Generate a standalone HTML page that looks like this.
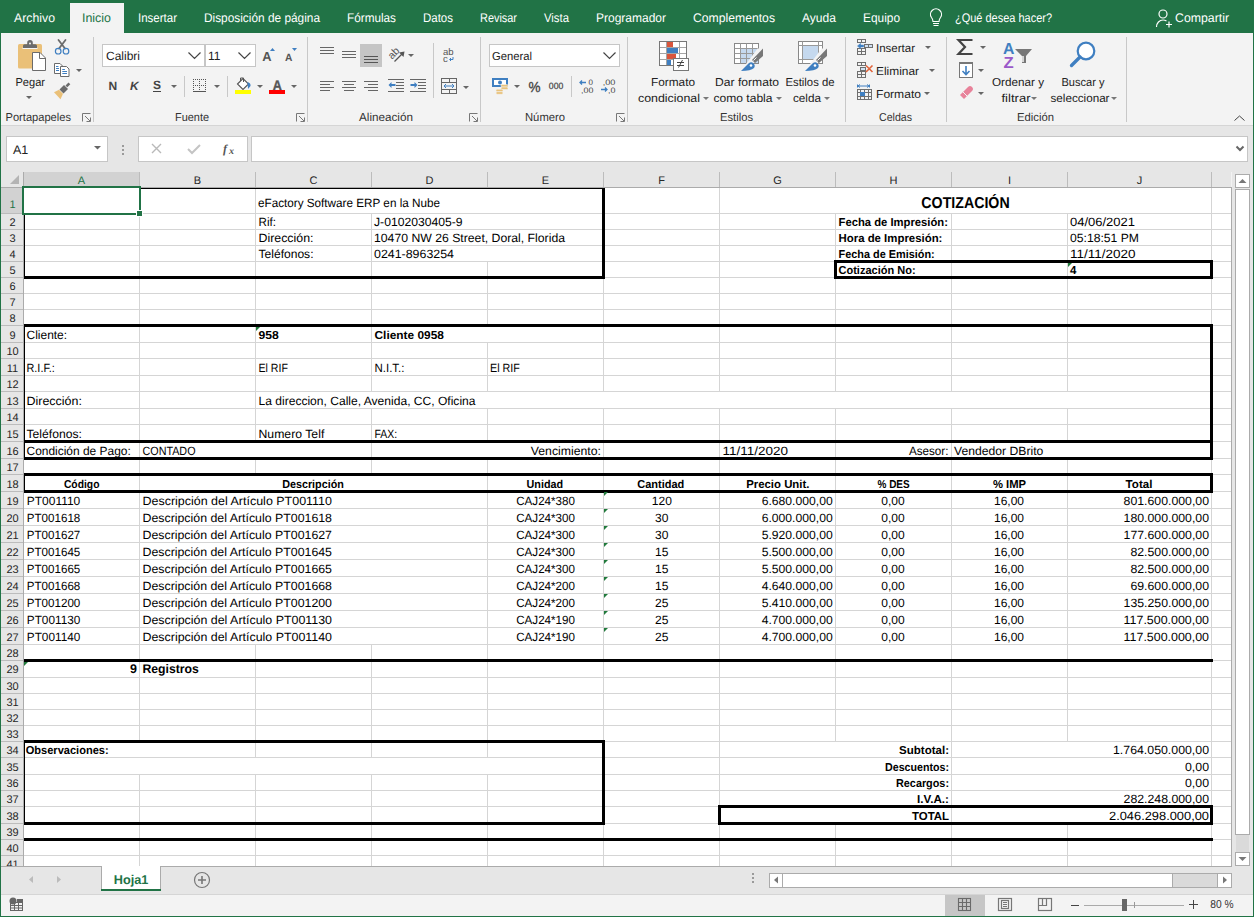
<!DOCTYPE html>
<html><head><meta charset="utf-8"><title>Excel - Cotización</title>
<style>
html,body{margin:0;padding:0;width:1254px;height:917px;overflow:hidden;background:#f3f3f3}
svg{display:block;font-family:"Liberation Sans", sans-serif}
</style></head><body>
<svg width="1254" height="917" viewBox="0 0 1254 917" text-rendering="geometricPrecision">
<rect x="0" y="0" width="1254" height="917" fill="#f3f3f3" />
<rect x="0" y="0" width="1254" height="33" fill="#217346" />
<rect x="70" y="3" width="54" height="30" fill="#f3f3f3" />
<text x="14" y="22" font-size="12.5" fill="#ffffff" text-anchor="start" textLength="41" lengthAdjust="spacingAndGlyphs" >Archivo</text>
<text x="82" y="22" font-size="12.5" fill="#217346" text-anchor="start" textLength="29" lengthAdjust="spacingAndGlyphs" >Inicio</text>
<text x="138" y="22" font-size="12.5" fill="#ffffff" text-anchor="start" textLength="39" lengthAdjust="spacingAndGlyphs" >Insertar</text>
<text x="204" y="22" font-size="12.5" fill="#ffffff" text-anchor="start" textLength="116" lengthAdjust="spacingAndGlyphs" >Disposición de página</text>
<text x="347" y="22" font-size="12.5" fill="#ffffff" text-anchor="start" textLength="49" lengthAdjust="spacingAndGlyphs" >Fórmulas</text>
<text x="423" y="22" font-size="12.5" fill="#ffffff" text-anchor="start" textLength="30" lengthAdjust="spacingAndGlyphs" >Datos</text>
<text x="480" y="22" font-size="12.5" fill="#ffffff" text-anchor="start" textLength="37" lengthAdjust="spacingAndGlyphs" >Revisar</text>
<text x="544" y="22" font-size="12.5" fill="#ffffff" text-anchor="start" textLength="25" lengthAdjust="spacingAndGlyphs" >Vista</text>
<text x="596" y="22" font-size="12.5" fill="#ffffff" text-anchor="start" textLength="70" lengthAdjust="spacingAndGlyphs" >Programador</text>
<text x="693" y="22" font-size="12.5" fill="#ffffff" text-anchor="start" textLength="82" lengthAdjust="spacingAndGlyphs" >Complementos</text>
<text x="802" y="22" font-size="12.5" fill="#ffffff" text-anchor="start" textLength="34" lengthAdjust="spacingAndGlyphs" >Ayuda</text>
<text x="863" y="22" font-size="12.5" fill="#ffffff" text-anchor="start" textLength="37" lengthAdjust="spacingAndGlyphs" >Equipo</text>
<text x="955" y="22" font-size="12.5" fill="#ffffff" text-anchor="start" textLength="97" lengthAdjust="spacingAndGlyphs" >¿Qué desea hacer?</text>
<text x="1175" y="22" font-size="12.5" fill="#ffffff" text-anchor="start" textLength="54" lengthAdjust="spacingAndGlyphs" >Compartir</text>
<g fill="none" stroke="#fff" stroke-width="1.2"><path d="M931.5,17.5 a5.5,5.5 0 1 1 9,0 c-1,1.3 -1.5,2.3 -1.5,4 h-6 c0,-1.7 -0.5,-2.7 -1.5,-4z"/><path d="M933,23.5 h6 M933.5,25.5 h5"/></g>
<g fill="none" stroke="#fff" stroke-width="1.2"><circle cx="1163" cy="14" r="4"/><path d="M1156.5,27 c0,-4 3,-7 6.5,-7 c1.5,0 2.5,0.4 3.5,1"/><path d="M1166,24.5 h6 M1169,21.5 v6"/></g>
<rect x="1" y="33" width="1252" height="92" fill="#f3f3f3" />
<rect x="1" y="125" width="1252" height="1" fill="#d5d5d5" />
<rect x="93" y="37" width="1" height="85" fill="#c8c8c8" />
<rect x="307" y="37" width="1" height="85" fill="#c8c8c8" />
<rect x="480" y="37" width="1" height="85" fill="#c8c8c8" />
<rect x="627" y="37" width="1" height="85" fill="#c8c8c8" />
<rect x="845" y="37" width="1" height="85" fill="#c8c8c8" />
<rect x="946" y="37" width="1" height="85" fill="#c8c8c8" />
<rect x="1126" y="37" width="1" height="85" fill="#c8c8c8" />
<text x="5.5" y="121" font-size="11.5" fill="#333333" text-anchor="start" textLength="65.5" lengthAdjust="spacingAndGlyphs" >Portapapeles</text>
<text x="175" y="121" font-size="11.5" fill="#333333" text-anchor="start" textLength="34" lengthAdjust="spacingAndGlyphs" >Fuente</text>
<text x="359" y="121" font-size="11.5" fill="#333333" text-anchor="start" textLength="54" lengthAdjust="spacingAndGlyphs" >Alineación</text>
<text x="525" y="121" font-size="11.5" fill="#333333" text-anchor="start" textLength="40" lengthAdjust="spacingAndGlyphs" >Número</text>
<text x="720" y="121" font-size="11.5" fill="#333333" text-anchor="start" textLength="33" lengthAdjust="spacingAndGlyphs" >Estilos</text>
<text x="879" y="121" font-size="11.5" fill="#333333" text-anchor="start" textLength="33" lengthAdjust="spacingAndGlyphs" >Celdas</text>
<text x="1017" y="121" font-size="11.5" fill="#333333" text-anchor="start" textLength="37" lengthAdjust="spacingAndGlyphs" >Edición</text>
<g fill="none" stroke="#777" stroke-width="1"><path d="M82.5,121.5 v-8 h8"/><path d="M85,116 l5,5 M90.5,117.5 v4 h-4"/></g>
<g fill="none" stroke="#777" stroke-width="1"><path d="M296.5,121.5 v-8 h8"/><path d="M299,116 l5,5 M304.5,117.5 v4 h-4"/></g>
<g fill="none" stroke="#777" stroke-width="1"><path d="M469.5,121.5 v-8 h8"/><path d="M472,116 l5,5 M477.5,117.5 v4 h-4"/></g>
<g fill="none" stroke="#777" stroke-width="1"><path d="M616.5,121.5 v-8 h8"/><path d="M619,116 l5,5 M624.5,117.5 v4 h-4"/></g>
<path d="M1234.5,120.5 l5,-4.5 l5,4.5" fill="none" stroke="#444" stroke-width="1"/>
<rect x="18" y="44" width="24" height="24.6" rx="1.5" fill="#eac078"/>
<rect x="22.5" y="47.6" width="15" height="1.4" fill="#f3f3f3"/>
<path d="M23,48 v-2.2 q0,-1.6 1.6,-1.6 h2.6 v-1.4 a2.8,2.8 0 0 1 5.6,0 v1.4 h2.6 q1.6,0 1.6,1.6 v2.2z" fill="#6b6b6b"/><circle cx="30" cy="43.6" r="1" fill="#f3f3f3"/>
<path d="M32.5,52.5 h7.5 l5.5,5.5 v12.5 h-13z" fill="#fff" stroke="#6b6b6b" stroke-width="1"/><path d="M39.5,52.5 v6 h6" fill="none" stroke="#6b6b6b" stroke-width="1"/>
<text x="15.5" y="86" font-size="11.5" fill="#222222" text-anchor="start" textLength="29.5" lengthAdjust="spacingAndGlyphs" >Pegar</text>
<path d="M26,96 h6 l-3,3z" fill="#666"/>
<g fill="none" stroke="#6b6b6b" stroke-width="1.8" stroke-linecap="round"><path d="M58.5,40 l6.5,8.5 M65.5,40 l-6.5,8.5"/></g><g fill="none" stroke="#3f7fc1" stroke-width="1.2"><circle cx="58.2" cy="51.2" r="2.8"/><circle cx="66" cy="51.2" r="2.8"/></g>
<g fill="#fff" stroke="#6b6b6b" stroke-width="1"><path d="M54.5,63.5 h5.5 l2.5,2.5 v7.5 h-8z"/><path d="M60.5,66.5 h6 l2.5,2.5 v7.5 h-8.5z"/></g><g stroke="#3f7fc1" stroke-width="1"><path d="M56,66.5 h2.5 M56,68.5 h3 M56,70.5 h3 M62.3,69.5 h2.6 M62.3,71.5 h4.7 M62.3,73.5 h4.7"/></g>
<path d="M76,69 h6 l-3,3z" fill="#666"/>
<path d="M54,92.3 l5,-2.5 l4,4 l-2.5,5.5z" fill="#eac078"/><path d="M59.5,89.5 l4.5,-4.5 l4,4 l-4.5,4.5z" fill="#6b6b6b"/><path d="M65.5,85.5 l3,-3 l1.8,1.8 l-3,3z" fill="#6b6b6b"/>
<rect x="102.5" y="44.5" width="102" height="22" fill="#fff" stroke="#c6c6c6"/>
<rect x="205.5" y="44.5" width="50" height="22" fill="#fff" stroke="#c6c6c6"/>
<text x="106" y="60" font-size="12" fill="#222222" text-anchor="start" textLength="34" lengthAdjust="spacingAndGlyphs" >Calibri</text>
<text x="208" y="60" font-size="12" fill="#222222" text-anchor="start" >11</text>
<path d="M188.5,52.5 l6,6 l6,-6 M238.5,52.5 l6,6 l6,-6" fill="none" stroke="#444" stroke-width="1.2"/>
<text x="262.2" y="61" font-size="13" font-weight="bold" fill="#555" text-anchor="start" textLength="9.3" lengthAdjust="spacingAndGlyphs" >A</text>
<path d="M270,51 l2.5,-3 l2.5,3z" fill="#3f7fc1"/>
<text x="285" y="61" font-size="10.5" font-weight="bold" fill="#555" text-anchor="start" textLength="7.4" lengthAdjust="spacingAndGlyphs" >A</text>
<path d="M292,48 h5 l-2.5,3z" fill="#3f7fc1"/>
<text x="108.5" y="90" font-size="12" font-weight="bold" fill="#444" text-anchor="start" >N</text>
<text x="130" y="90" font-size="12" font-weight="bold" fill="#444" text-anchor="start" font-style="italic">K</text>
<text x="153" y="89" font-size="12" font-weight="bold" fill="#444" text-anchor="start" >S</text>
<rect x="153" y="91" width="8" height="1" fill="#444" />
<path d="M171,85 h6 l-3,3z" fill="#666"/>
<rect x="184" y="76" width="1" height="21" fill="#c8c8c8" />
<g fill="#555"><rect x="193" y="79" width="1" height="1"/><rect x="193" y="81" width="1" height="1"/><rect x="193" y="83" width="1" height="1"/><rect x="193" y="85" width="1" height="1"/><rect x="193" y="87" width="1" height="1"/><rect x="193" y="89" width="1" height="1"/><rect x="195" y="79" width="1" height="1"/><rect x="195" y="85" width="1" height="1"/><rect x="197" y="79" width="1" height="1"/><rect x="197" y="85" width="1" height="1"/><rect x="199" y="79" width="1" height="1"/><rect x="199" y="81" width="1" height="1"/><rect x="199" y="83" width="1" height="1"/><rect x="199" y="85" width="1" height="1"/><rect x="199" y="87" width="1" height="1"/><rect x="199" y="89" width="1" height="1"/><rect x="201" y="79" width="1" height="1"/><rect x="201" y="85" width="1" height="1"/><rect x="203" y="79" width="1" height="1"/><rect x="203" y="85" width="1" height="1"/><rect x="205" y="79" width="1" height="1"/><rect x="205" y="81" width="1" height="1"/><rect x="205" y="83" width="1" height="1"/><rect x="205" y="85" width="1" height="1"/><rect x="205" y="87" width="1" height="1"/><rect x="205" y="89" width="1" height="1"/></g><rect x="193" y="91" width="13" height="1" fill="#555"/>
<path d="M214,85 h6 l-3,3z" fill="#666"/>
<rect x="227" y="76" width="1" height="21" fill="#c8c8c8" />
<path d="M237.5,84 l5.5,-5.5 l5.5,5.5 l-5.5,5.5z" fill="#fff" stroke="#555" stroke-width="1.1"/><path d="M240.5,81 v-3 h3 v4" fill="none" stroke="#555" stroke-width="1"/><path d="M247.5,82 q3.5,1 3,4 l-2.5,3z" fill="#3f7fc1"/>
<rect x="235" y="90" width="16" height="4" fill="#ffff00" />
<path d="M257,85 h6 l-3,3z" fill="#666"/>
<text x="272.8" y="90" font-size="14" font-weight="bold" fill="#555" text-anchor="start" textLength="9.1" lengthAdjust="spacingAndGlyphs" stroke="#555" stroke-width="0.4">A</text>
<rect x="269" y="90" width="16" height="4" fill="#ff0000" />
<path d="M291,85 h6 l-3,3z" fill="#666"/>
<rect x="320" y="47" width="14" height="1" fill="#666" />
<rect x="320" y="50" width="14" height="1" fill="#666" />
<rect x="320" y="53" width="14" height="1" fill="#666" />
<rect x="342" y="51" width="14" height="1" fill="#666" />
<rect x="342" y="54" width="14" height="1" fill="#666" />
<rect x="342" y="57" width="14" height="1" fill="#666" />
<rect x="360" y="44" width="22" height="23" fill="#c5c5c5" />
<rect x="364" y="56" width="14" height="1" fill="#555" />
<rect x="364" y="59" width="14" height="1" fill="#555" />
<rect x="364" y="62" width="14" height="1" fill="#555" />
<g transform="translate(393.5,53) rotate(-45)"><text x="0" y="3.6" font-size="10.5" fill="#555" text-anchor="middle" shape-rendering="auto">ab</text></g><path d="M394.5,61.5 l8,-8" fill="none" stroke="#555" stroke-width="1.2" shape-rendering="auto"/><path d="M404.5,51.5 l-5.5,1 l4.5,4.5z" fill="#555" shape-rendering="auto"/>
<path d="M408,54 h6 l-3,3z" fill="#666"/>
<rect x="433" y="43" width="1" height="55" fill="#c8c8c8" />
<text x="443" y="55" font-size="9.5" fill="#555" text-anchor="start" >ab</text>
<text x="443" y="62" font-size="9.5" fill="#555" text-anchor="start" >c</text>
<path d="M453,57 v2.5 h-3 M451,58 l-1.5,1.5 l1.5,1.5" fill="none" stroke="#3f7fc1" stroke-width="1"/>
<rect x="320" y="81" width="14" height="1" fill="#666" />
<rect x="320" y="84" width="10" height="1" fill="#666" />
<rect x="320" y="87" width="14" height="1" fill="#666" />
<rect x="320" y="90" width="10" height="1" fill="#666" />
<rect x="342" y="81" width="14" height="1" fill="#666" />
<rect x="342" y="87" width="14" height="1" fill="#666" />
<rect x="344" y="84" width="10" height="1" fill="#666" />
<rect x="344" y="90" width="10" height="1" fill="#666" />
<rect x="364" y="81" width="14" height="1" fill="#666" />
<rect x="364" y="87" width="14" height="1" fill="#666" />
<rect x="368" y="84" width="10" height="1" fill="#666" />
<rect x="368" y="90" width="10" height="1" fill="#666" />
<rect x="388" y="79" width="16" height="1" fill="#666" />
<rect x="388" y="91" width="16" height="1" fill="#666" />
<rect x="396" y="82" width="8" height="1" fill="#666" />
<rect x="396" y="85" width="8" height="1" fill="#666" />
<rect x="396" y="88" width="8" height="1" fill="#666" />
<path d="M388.5,85 l3,-3 v2 h4 v2 h-4 v2z" fill="#3f7fc1"/>
<rect x="410" y="79" width="16" height="1" fill="#666" />
<rect x="410" y="91" width="16" height="1" fill="#666" />
<rect x="418" y="82" width="8" height="1" fill="#666" />
<rect x="418" y="85" width="8" height="1" fill="#666" />
<rect x="418" y="88" width="8" height="1" fill="#666" />
<path d="M417.5,85 l-3,-3 v2 h-4 v2 h4 v2z" fill="#3f7fc1"/>
<g fill="none" stroke="#666" stroke-width="1"><rect x="441.5" y="78.5" width="15" height="15"/><path d="M441.5,82.5 h15 M441.5,89.5 h15 M449.5,78.5 v4 M449.5,89.5 v4"/></g><path d="M444,86 h10 M446,84 l-2,2 l2,2 M452,84 l2,2 l-2,2" fill="none" stroke="#3f7fc1" stroke-width="1"/>
<path d="M463,86 h6 l-3,3z" fill="#666"/>
<rect x="489.5" y="44.5" width="130" height="22" fill="#fff" stroke="#c6c6c6"/>
<text x="492" y="60" font-size="11.5" fill="#222222" text-anchor="start" textLength="40" lengthAdjust="spacingAndGlyphs" >General</text>
<path d="M603.5,52.5 l6,6 l6,-6" fill="none" stroke="#444" stroke-width="1.2"/>
<rect x="492" y="78" width="16" height="9" fill="#3f7fc1"/><rect x="494" y="80" width="12" height="5" fill="#fff"/><circle cx="500" cy="82.5" r="2" fill="#3f7fc1"/><g fill="#e9c27b" stroke="#f3f3f3" stroke-width="0.6"><rect x="501" y="84.5" width="7" height="2.6" rx="1.2"/><rect x="501" y="87" width="7" height="2.6" rx="1.2"/><rect x="496" y="89.2" width="7" height="2.6" rx="1.2"/><rect x="496" y="91.7" width="7" height="2.6" rx="1.2"/></g>
<path d="M514,85 h6 l-3,3z" fill="#666"/>
<text x="528.5" y="92" font-size="14.5" fill="#444" text-anchor="start" textLength="12" lengthAdjust="spacingAndGlyphs" stroke="#444" stroke-width="0.35">%</text>
<text x="548.8" y="89" font-size="9" fill="#444" text-anchor="start" textLength="14.5" lengthAdjust="spacingAndGlyphs" stroke="#444" stroke-width="0.2">000</text>
<rect x="571" y="76" width="1" height="21" fill="#c8c8c8" />
<text x="588.5" y="85" font-size="8" fill="#444" text-anchor="start" >0</text>
<text x="581" y="93" font-size="8" fill="#444" text-anchor="start" textLength="12.3" lengthAdjust="spacingAndGlyphs" >,00</text>
<path d="M580,82.5 h6 M582,80.5 l-2,2 l2,2" fill="none" stroke="#3f7fc1" stroke-width="1.3"/>
<text x="602.7" y="85" font-size="8" fill="#444" text-anchor="start" textLength="12.7" lengthAdjust="spacingAndGlyphs" >,00</text>
<text x="608" y="93" font-size="8" fill="#444" text-anchor="start" textLength="7.4" lengthAdjust="spacingAndGlyphs" >,0</text>
<path d="M601,89.5 h6 M605,87.5 l2,2 l-2,2" fill="none" stroke="#3f7fc1" stroke-width="1.3"/>
<rect x="659.5" y="41.5" width="27" height="24" fill="#fff" stroke="#777"/><rect x="667" y="42" width="6" height="5" fill="#d9553c"/><rect x="667" y="48" width="11" height="5" fill="#3f7fc1"/><rect x="667" y="54" width="9" height="5" fill="#d9553c"/><rect x="667" y="60" width="4" height="5" fill="#3f7fc1"/><g fill="#a5a5a5"><rect x="660" y="47" width="26" height="1"/><rect x="660" y="53" width="26" height="1"/><rect x="660" y="59" width="26" height="1"/><rect x="666" y="42" width="1" height="23"/><rect x="679" y="42" width="1" height="23"/></g><rect x="673.5" y="58.5" width="15" height="12" fill="#fff" stroke="#777"/><path d="M677,62.5 h7 M677,65.5 h7 M682.5,60 l-4,7.5" fill="none" stroke="#444" stroke-width="1"/>
<g fill="#fff" stroke="#888" stroke-width="1"><rect x="734.5" y="43.5" width="24" height="20"/></g><rect x="740" y="49" width="18" height="14" fill="#c5d9ef"/><g stroke="#999" stroke-width="1"><path d="M734.5,48.5 h24 M734.5,53.5 h24 M734.5,58.5 h24 M740.5,43.5 v20 M746.5,43.5 v20 M752.5,43.5 v20"/></g><path d="M746,64 L758,48 L764,54 L750,66z" fill="#f3f3f3"/><path d="M763,48.5 v7.5 l-8,7 l-3,-3z" fill="#777"/><path d="M756.5,57.5 l-3,3" stroke="#f3f3f3" stroke-width="1"/><path d="M741,71 l8,-8 a3.6,3.6 0 0 1 5,5 q-3,3 -13,3z" fill="#3f7fc1"/><circle cx="751" cy="65.5" r="1.3" fill="#fff"/>
<g fill="#fff" stroke="#888" stroke-width="1"><rect x="798.5" y="41.5" width="24" height="22"/></g><rect x="803" y="46" width="16" height="13" fill="#c5d9ef"/><g stroke="#999" stroke-width="1"><path d="M798.5,45.5 h24 M798.5,59.5 h24 M802.5,41.5 v22 M818.5,41.5 v22"/></g><path d="M810,64 L822,48 L828,54 L814,66z" fill="#f3f3f3"/><path d="M827,48.5 v7.5 l-8,7 l-3,-3z" fill="#777"/><path d="M820.5,57.5 l-3,3" stroke="#f3f3f3" stroke-width="1"/><path d="M805,71 l8,-8 a3.6,3.6 0 0 1 5,5 q-3,3 -13,3z" fill="#3f7fc1"/><circle cx="815" cy="65.5" r="1.3" fill="#fff"/>
<text x="673" y="86" font-size="11.5" fill="#222222" text-anchor="middle" textLength="44" lengthAdjust="spacingAndGlyphs" >Formato</text>
<text x="669" y="102" font-size="11.5" fill="#222222" text-anchor="middle" textLength="62" lengthAdjust="spacingAndGlyphs" >condicional</text>
<path d="M703,97 h6 l-3,3z" fill="#777"/>
<text x="747" y="86" font-size="11.5" fill="#222222" text-anchor="middle" textLength="64" lengthAdjust="spacingAndGlyphs" >Dar formato</text>
<text x="743" y="102" font-size="11.5" fill="#222222" text-anchor="middle" textLength="59" lengthAdjust="spacingAndGlyphs" >como tabla</text>
<path d="M776,97 h6 l-3,3z" fill="#777"/>
<text x="810" y="86" font-size="11.5" fill="#222222" text-anchor="middle" textLength="49" lengthAdjust="spacingAndGlyphs" >Estilos de</text>
<text x="807" y="102" font-size="11.5" fill="#222222" text-anchor="middle" textLength="28" lengthAdjust="spacingAndGlyphs" >celda</text>
<path d="M824,97 h6 l-3,3z" fill="#777"/>
<g fill="none" stroke="#6f6f6f" stroke-width="1"><rect x="857.5" y="39.5" width="8" height="3"/><path d="M861.5,39.5 v3"/><rect x="857.5" y="48.5" width="8" height="6"/><path d="M857.5,51.5 h8 M861.5,48.5 v6"/><rect x="864.5" y="44.5" width="8" height="3" fill="#cfe0f3"/><path d="M868.5,44.5 v3"/></g><path d="M857.5,46 l3,-2.5 v1.6 h3 v1.8 h-3 v1.6z" fill="#3f7fc1" stroke="#3f7fc1" stroke-width="0.6"/>
<text x="876" y="52" font-size="11.5" fill="#222222" text-anchor="start" textLength="39" lengthAdjust="spacingAndGlyphs" >Insertar</text>
<path d="M925,46 h6 l-3,3z" fill="#666"/>
<g fill="none" stroke="#6f6f6f" stroke-width="1"><rect x="857.5" y="62.5" width="8" height="3"/><path d="M861.5,62.5 v3"/><rect x="857.5" y="71.5" width="8" height="6"/><path d="M857.5,74.5 h8 M861.5,71.5 v6"/><rect x="860.5" y="67.5" width="5" height="3" fill="#cfe0f3"/></g><path d="M866,65.5 l6.5,6.5 M872.5,65.5 l-6.5,6.5" fill="none" stroke="#e0643c" stroke-width="1.6"/>
<text x="876" y="75" font-size="11.5" fill="#222222" text-anchor="start" textLength="43" lengthAdjust="spacingAndGlyphs" >Eliminar</text>
<path d="M929,69 h6 l-3,3z" fill="#666"/>
<g fill="none" stroke="#6f6f6f" stroke-width="1"><rect x="857.5" y="89.5" width="14" height="10"/><path d="M857.5,92.5 h14 M857.5,96.5 h14 M860.5,89.5 v10 M864.5,89.5 v10 M868.5,89.5 v10"/></g><rect x="860" y="92" width="5" height="4" fill="#3f7fc1"/><path d="M858,86 h11 M857.5,84.5 v3 M869.5,84.5 v3 M860,84.5 l-2,1.5 l2,1.5 M867,84.5 l2,1.5 l-2,1.5" fill="none" stroke="#3f7fc1" stroke-width="1"/>
<text x="876" y="98" font-size="11.5" fill="#222222" text-anchor="start" textLength="45" lengthAdjust="spacingAndGlyphs" >Formato</text>
<path d="M924,92 h6 l-3,3z" fill="#666"/>
<path d="M972.5,40 h-14 l6.5,7 l-6.5,7 h14" fill="none" stroke="#444" stroke-width="2.2"/>
<path d="M980,46 h6 l-3,3z" fill="#666"/>
<rect x="959.5" y="62.5" width="13" height="15" fill="#fff" stroke="#777"/><rect x="959" y="62" width="14" height="2" fill="#777"/><path d="M966,66 v8 M962.5,71 l3.5,3.5 l3.5,-3.5" fill="none" stroke="#3f7fc1" stroke-width="1.6"/>
<path d="M978,69 h6 l-3,3z" fill="#666"/>
<path d="M960,95 l8,-8 q2,-2 4,0 l0,0 q2,2 0,4 l-8,8z" fill="#e8829a"/><path d="M963,92 l4,4" stroke="#f3f3f3" stroke-width="1"/>
<path d="M978,92 h6 l-3,3z" fill="#666"/>
<text x="1003" y="54" font-size="16" font-weight="bold" fill="#3f7fc1" text-anchor="start" textLength="11.4" lengthAdjust="spacingAndGlyphs" >A</text>
<text x="1003.6" y="68" font-size="16" font-weight="bold" fill="#9b59c9" text-anchor="start" textLength="10.2" lengthAdjust="spacingAndGlyphs" >Z</text>
<path d="M1015,49 h17 l-6,7 v7 h-4 v-7z" fill="#777"/><path d="M1023,56 v6" stroke="#f3f3f3" stroke-width="1.5"/>
<text x="1018" y="86" font-size="11.5" fill="#222222" text-anchor="middle" textLength="52" lengthAdjust="spacingAndGlyphs" >Ordenar y</text>
<text x="1016" y="102" font-size="11.5" fill="#222222" text-anchor="middle" textLength="29" lengthAdjust="spacingAndGlyphs" >filtrar</text>
<path d="M1031,97 h6 l-3,3z" fill="#777"/>
<circle cx="1086" cy="51" r="8.3" fill="#fff" stroke="#3f7fc1" stroke-width="2.2"/><path d="M1080,57 l-8.5,8.5" stroke="#3f7fc1" stroke-width="3.3" stroke-linecap="round"/>
<text x="1083" y="86" font-size="11.5" fill="#222222" text-anchor="middle" textLength="43" lengthAdjust="spacingAndGlyphs" >Buscar y</text>
<text x="1080" y="102" font-size="11.5" fill="#222222" text-anchor="middle" textLength="59" lengthAdjust="spacingAndGlyphs" >seleccionar</text>
<path d="M1111,97 h6 l-3,3z" fill="#777"/>
<rect x="1" y="126" width="1252" height="46" fill="#e6e6e6" />
<rect x="6.5" y="136.5" width="101" height="25" fill="#fff" stroke="#c6c6c6"/>
<text x="13" y="154" font-size="12.5" fill="#222222" text-anchor="start" >A1</text>
<path d="M94,146 h7 l-3.5,3.5z" fill="#666"/>
<rect x="122" y="145" width="2" height="2" fill="#9a9a9a" />
<rect x="122" y="149" width="2" height="2" fill="#9a9a9a" />
<rect x="122" y="153" width="2" height="2" fill="#9a9a9a" />
<rect x="138.5" y="136.5" width="109" height="25" fill="#fff" stroke="#c6c6c6"/>
<path d="M152,144 l9,9 M161,144 l-9,9" stroke="#b9b9b9" stroke-width="1.4"/>
<path d="M188,149 l4,4 l8,-8" fill="none" stroke="#c4c4c4" stroke-width="2"/>
<text x="223" y="153" font-size="12" font-weight="bold" fill="#555" text-anchor="start" font-style="italic" font-family="Liberation Serif">f</text>
<text x="229" y="154" font-size="10" font-weight="bold" fill="#555" text-anchor="start" font-style="italic" font-family="Liberation Serif">x</text>
<rect x="251.5" y="136.5" width="996" height="25" fill="#fff" stroke="#c6c6c6"/>
<path d="M1236.5,146.5 l3.5,3.5 l3.5,-3.5" fill="none" stroke="#666" stroke-width="2"/>
<rect x="24" y="188" width="1207" height="678" fill="#ffffff" />
<rect x="24" y="213" width="1207" height="1" fill="#d5d5d5" />
<rect x="24" y="229" width="1207" height="1" fill="#d5d5d5" />
<rect x="24" y="245" width="1207" height="1" fill="#d5d5d5" />
<rect x="24" y="261" width="1207" height="1" fill="#d5d5d5" />
<rect x="24" y="277" width="1207" height="1" fill="#d5d5d5" />
<rect x="24" y="293" width="1207" height="1" fill="#d5d5d5" />
<rect x="24" y="309" width="1207" height="1" fill="#d5d5d5" />
<rect x="24" y="325" width="1207" height="1" fill="#d5d5d5" />
<rect x="24" y="342" width="1207" height="1" fill="#d5d5d5" />
<rect x="24" y="358" width="1207" height="1" fill="#d5d5d5" />
<rect x="24" y="375" width="1207" height="1" fill="#d5d5d5" />
<rect x="24" y="391" width="1207" height="1" fill="#d5d5d5" />
<rect x="24" y="408" width="1207" height="1" fill="#d5d5d5" />
<rect x="24" y="424" width="1207" height="1" fill="#d5d5d5" />
<rect x="24" y="441" width="1207" height="1" fill="#d5d5d5" />
<rect x="24" y="458" width="1207" height="1" fill="#d5d5d5" />
<rect x="24" y="474" width="1207" height="1" fill="#d5d5d5" />
<rect x="24" y="491" width="1207" height="1" fill="#d5d5d5" />
<rect x="24" y="508" width="1207" height="1" fill="#d5d5d5" />
<rect x="24" y="525" width="1207" height="1" fill="#d5d5d5" />
<rect x="24" y="542" width="1207" height="1" fill="#d5d5d5" />
<rect x="24" y="559" width="1207" height="1" fill="#d5d5d5" />
<rect x="24" y="576" width="1207" height="1" fill="#d5d5d5" />
<rect x="24" y="593" width="1207" height="1" fill="#d5d5d5" />
<rect x="24" y="610" width="1207" height="1" fill="#d5d5d5" />
<rect x="24" y="627" width="1207" height="1" fill="#d5d5d5" />
<rect x="24" y="644" width="1207" height="1" fill="#d5d5d5" />
<rect x="24" y="660" width="1207" height="1" fill="#d5d5d5" />
<rect x="24" y="677" width="1207" height="1" fill="#d5d5d5" />
<rect x="24" y="693" width="1207" height="1" fill="#d5d5d5" />
<rect x="24" y="709" width="1207" height="1" fill="#d5d5d5" />
<rect x="24" y="725" width="1207" height="1" fill="#d5d5d5" />
<rect x="24" y="741" width="1207" height="1" fill="#d5d5d5" />
<rect x="24" y="757" width="1207" height="1" fill="#d5d5d5" />
<rect x="24" y="774" width="1207" height="1" fill="#d5d5d5" />
<rect x="24" y="790" width="1207" height="1" fill="#d5d5d5" />
<rect x="24" y="806" width="1207" height="1" fill="#d5d5d5" />
<rect x="24" y="823" width="1207" height="1" fill="#d5d5d5" />
<rect x="24" y="839" width="1207" height="1" fill="#d5d5d5" />
<rect x="24" y="855" width="1207" height="1" fill="#d5d5d5" />
<rect x="139" y="188" width="1" height="26" fill="#d5d5d5" />
<rect x="255" y="188" width="1" height="26" fill="#d5d5d5" />
<rect x="603" y="188" width="1" height="26" fill="#d5d5d5" />
<rect x="719" y="188" width="1" height="26" fill="#d5d5d5" />
<rect x="1211" y="188" width="1" height="26" fill="#d5d5d5" />
<rect x="139" y="214" width="1" height="16" fill="#d5d5d5" />
<rect x="255" y="214" width="1" height="16" fill="#d5d5d5" />
<rect x="371" y="214" width="1" height="16" fill="#d5d5d5" />
<rect x="603" y="214" width="1" height="16" fill="#d5d5d5" />
<rect x="719" y="214" width="1" height="16" fill="#d5d5d5" />
<rect x="835" y="214" width="1" height="16" fill="#d5d5d5" />
<rect x="951" y="214" width="1" height="16" fill="#d5d5d5" />
<rect x="1067" y="214" width="1" height="16" fill="#d5d5d5" />
<rect x="1211" y="214" width="1" height="16" fill="#d5d5d5" />
<rect x="139" y="230" width="1" height="16" fill="#d5d5d5" />
<rect x="255" y="230" width="1" height="16" fill="#d5d5d5" />
<rect x="371" y="230" width="1" height="16" fill="#d5d5d5" />
<rect x="603" y="230" width="1" height="16" fill="#d5d5d5" />
<rect x="719" y="230" width="1" height="16" fill="#d5d5d5" />
<rect x="835" y="230" width="1" height="16" fill="#d5d5d5" />
<rect x="951" y="230" width="1" height="16" fill="#d5d5d5" />
<rect x="1067" y="230" width="1" height="16" fill="#d5d5d5" />
<rect x="1211" y="230" width="1" height="16" fill="#d5d5d5" />
<rect x="139" y="246" width="1" height="16" fill="#d5d5d5" />
<rect x="255" y="246" width="1" height="16" fill="#d5d5d5" />
<rect x="371" y="246" width="1" height="16" fill="#d5d5d5" />
<rect x="603" y="246" width="1" height="16" fill="#d5d5d5" />
<rect x="719" y="246" width="1" height="16" fill="#d5d5d5" />
<rect x="835" y="246" width="1" height="16" fill="#d5d5d5" />
<rect x="951" y="246" width="1" height="16" fill="#d5d5d5" />
<rect x="1067" y="246" width="1" height="16" fill="#d5d5d5" />
<rect x="1211" y="246" width="1" height="16" fill="#d5d5d5" />
<rect x="139" y="262" width="1" height="16" fill="#d5d5d5" />
<rect x="255" y="262" width="1" height="16" fill="#d5d5d5" />
<rect x="371" y="262" width="1" height="16" fill="#d5d5d5" />
<rect x="487" y="262" width="1" height="16" fill="#d5d5d5" />
<rect x="603" y="262" width="1" height="16" fill="#d5d5d5" />
<rect x="719" y="262" width="1" height="16" fill="#d5d5d5" />
<rect x="835" y="262" width="1" height="16" fill="#d5d5d5" />
<rect x="951" y="262" width="1" height="16" fill="#d5d5d5" />
<rect x="1067" y="262" width="1" height="16" fill="#d5d5d5" />
<rect x="1211" y="262" width="1" height="16" fill="#d5d5d5" />
<rect x="139" y="278" width="1" height="16" fill="#d5d5d5" />
<rect x="255" y="278" width="1" height="16" fill="#d5d5d5" />
<rect x="371" y="278" width="1" height="16" fill="#d5d5d5" />
<rect x="487" y="278" width="1" height="16" fill="#d5d5d5" />
<rect x="603" y="278" width="1" height="16" fill="#d5d5d5" />
<rect x="719" y="278" width="1" height="16" fill="#d5d5d5" />
<rect x="835" y="278" width="1" height="16" fill="#d5d5d5" />
<rect x="951" y="278" width="1" height="16" fill="#d5d5d5" />
<rect x="1067" y="278" width="1" height="16" fill="#d5d5d5" />
<rect x="1211" y="278" width="1" height="16" fill="#d5d5d5" />
<rect x="139" y="294" width="1" height="16" fill="#d5d5d5" />
<rect x="255" y="294" width="1" height="16" fill="#d5d5d5" />
<rect x="371" y="294" width="1" height="16" fill="#d5d5d5" />
<rect x="487" y="294" width="1" height="16" fill="#d5d5d5" />
<rect x="603" y="294" width="1" height="16" fill="#d5d5d5" />
<rect x="719" y="294" width="1" height="16" fill="#d5d5d5" />
<rect x="835" y="294" width="1" height="16" fill="#d5d5d5" />
<rect x="951" y="294" width="1" height="16" fill="#d5d5d5" />
<rect x="1067" y="294" width="1" height="16" fill="#d5d5d5" />
<rect x="1211" y="294" width="1" height="16" fill="#d5d5d5" />
<rect x="139" y="310" width="1" height="16" fill="#d5d5d5" />
<rect x="255" y="310" width="1" height="16" fill="#d5d5d5" />
<rect x="371" y="310" width="1" height="16" fill="#d5d5d5" />
<rect x="487" y="310" width="1" height="16" fill="#d5d5d5" />
<rect x="603" y="310" width="1" height="16" fill="#d5d5d5" />
<rect x="719" y="310" width="1" height="16" fill="#d5d5d5" />
<rect x="835" y="310" width="1" height="16" fill="#d5d5d5" />
<rect x="951" y="310" width="1" height="16" fill="#d5d5d5" />
<rect x="1067" y="310" width="1" height="16" fill="#d5d5d5" />
<rect x="1211" y="310" width="1" height="16" fill="#d5d5d5" />
<rect x="139" y="326" width="1" height="17" fill="#d5d5d5" />
<rect x="255" y="326" width="1" height="17" fill="#d5d5d5" />
<rect x="371" y="326" width="1" height="17" fill="#d5d5d5" />
<rect x="603" y="326" width="1" height="17" fill="#d5d5d5" />
<rect x="719" y="326" width="1" height="17" fill="#d5d5d5" />
<rect x="835" y="326" width="1" height="17" fill="#d5d5d5" />
<rect x="951" y="326" width="1" height="17" fill="#d5d5d5" />
<rect x="1067" y="326" width="1" height="17" fill="#d5d5d5" />
<rect x="1211" y="326" width="1" height="17" fill="#d5d5d5" />
<rect x="139" y="343" width="1" height="16" fill="#d5d5d5" />
<rect x="255" y="343" width="1" height="16" fill="#d5d5d5" />
<rect x="371" y="343" width="1" height="16" fill="#d5d5d5" />
<rect x="487" y="343" width="1" height="16" fill="#d5d5d5" />
<rect x="603" y="343" width="1" height="16" fill="#d5d5d5" />
<rect x="719" y="343" width="1" height="16" fill="#d5d5d5" />
<rect x="835" y="343" width="1" height="16" fill="#d5d5d5" />
<rect x="951" y="343" width="1" height="16" fill="#d5d5d5" />
<rect x="1067" y="343" width="1" height="16" fill="#d5d5d5" />
<rect x="1211" y="343" width="1" height="16" fill="#d5d5d5" />
<rect x="139" y="359" width="1" height="17" fill="#d5d5d5" />
<rect x="255" y="359" width="1" height="17" fill="#d5d5d5" />
<rect x="371" y="359" width="1" height="17" fill="#d5d5d5" />
<rect x="487" y="359" width="1" height="17" fill="#d5d5d5" />
<rect x="603" y="359" width="1" height="17" fill="#d5d5d5" />
<rect x="719" y="359" width="1" height="17" fill="#d5d5d5" />
<rect x="835" y="359" width="1" height="17" fill="#d5d5d5" />
<rect x="951" y="359" width="1" height="17" fill="#d5d5d5" />
<rect x="1067" y="359" width="1" height="17" fill="#d5d5d5" />
<rect x="1211" y="359" width="1" height="17" fill="#d5d5d5" />
<rect x="139" y="376" width="1" height="16" fill="#d5d5d5" />
<rect x="255" y="376" width="1" height="16" fill="#d5d5d5" />
<rect x="371" y="376" width="1" height="16" fill="#d5d5d5" />
<rect x="487" y="376" width="1" height="16" fill="#d5d5d5" />
<rect x="603" y="376" width="1" height="16" fill="#d5d5d5" />
<rect x="719" y="376" width="1" height="16" fill="#d5d5d5" />
<rect x="835" y="376" width="1" height="16" fill="#d5d5d5" />
<rect x="951" y="376" width="1" height="16" fill="#d5d5d5" />
<rect x="1067" y="376" width="1" height="16" fill="#d5d5d5" />
<rect x="1211" y="376" width="1" height="16" fill="#d5d5d5" />
<rect x="139" y="392" width="1" height="17" fill="#d5d5d5" />
<rect x="255" y="392" width="1" height="17" fill="#d5d5d5" />
<rect x="1211" y="392" width="1" height="17" fill="#d5d5d5" />
<rect x="139" y="409" width="1" height="16" fill="#d5d5d5" />
<rect x="255" y="409" width="1" height="16" fill="#d5d5d5" />
<rect x="371" y="409" width="1" height="16" fill="#d5d5d5" />
<rect x="487" y="409" width="1" height="16" fill="#d5d5d5" />
<rect x="603" y="409" width="1" height="16" fill="#d5d5d5" />
<rect x="719" y="409" width="1" height="16" fill="#d5d5d5" />
<rect x="835" y="409" width="1" height="16" fill="#d5d5d5" />
<rect x="951" y="409" width="1" height="16" fill="#d5d5d5" />
<rect x="1067" y="409" width="1" height="16" fill="#d5d5d5" />
<rect x="1211" y="409" width="1" height="16" fill="#d5d5d5" />
<rect x="139" y="425" width="1" height="17" fill="#d5d5d5" />
<rect x="255" y="425" width="1" height="17" fill="#d5d5d5" />
<rect x="371" y="425" width="1" height="17" fill="#d5d5d5" />
<rect x="487" y="425" width="1" height="17" fill="#d5d5d5" />
<rect x="603" y="425" width="1" height="17" fill="#d5d5d5" />
<rect x="719" y="425" width="1" height="17" fill="#d5d5d5" />
<rect x="835" y="425" width="1" height="17" fill="#d5d5d5" />
<rect x="951" y="425" width="1" height="17" fill="#d5d5d5" />
<rect x="1067" y="425" width="1" height="17" fill="#d5d5d5" />
<rect x="1211" y="425" width="1" height="17" fill="#d5d5d5" />
<rect x="139" y="442" width="1" height="17" fill="#d5d5d5" />
<rect x="371" y="442" width="1" height="17" fill="#d5d5d5" />
<rect x="603" y="442" width="1" height="17" fill="#d5d5d5" />
<rect x="719" y="442" width="1" height="17" fill="#d5d5d5" />
<rect x="835" y="442" width="1" height="17" fill="#d5d5d5" />
<rect x="951" y="442" width="1" height="17" fill="#d5d5d5" />
<rect x="1211" y="442" width="1" height="17" fill="#d5d5d5" />
<rect x="139" y="459" width="1" height="16" fill="#d5d5d5" />
<rect x="255" y="459" width="1" height="16" fill="#d5d5d5" />
<rect x="371" y="459" width="1" height="16" fill="#d5d5d5" />
<rect x="487" y="459" width="1" height="16" fill="#d5d5d5" />
<rect x="603" y="459" width="1" height="16" fill="#d5d5d5" />
<rect x="719" y="459" width="1" height="16" fill="#d5d5d5" />
<rect x="835" y="459" width="1" height="16" fill="#d5d5d5" />
<rect x="951" y="459" width="1" height="16" fill="#d5d5d5" />
<rect x="1067" y="459" width="1" height="16" fill="#d5d5d5" />
<rect x="1211" y="459" width="1" height="16" fill="#d5d5d5" />
<rect x="139" y="475" width="1" height="17" fill="#d5d5d5" />
<rect x="487" y="475" width="1" height="17" fill="#d5d5d5" />
<rect x="603" y="475" width="1" height="17" fill="#d5d5d5" />
<rect x="719" y="475" width="1" height="17" fill="#d5d5d5" />
<rect x="835" y="475" width="1" height="17" fill="#d5d5d5" />
<rect x="951" y="475" width="1" height="17" fill="#d5d5d5" />
<rect x="1067" y="475" width="1" height="17" fill="#d5d5d5" />
<rect x="1211" y="475" width="1" height="17" fill="#d5d5d5" />
<rect x="139" y="492" width="1" height="17" fill="#d5d5d5" />
<rect x="487" y="492" width="1" height="17" fill="#d5d5d5" />
<rect x="603" y="492" width="1" height="17" fill="#d5d5d5" />
<rect x="719" y="492" width="1" height="17" fill="#d5d5d5" />
<rect x="835" y="492" width="1" height="17" fill="#d5d5d5" />
<rect x="951" y="492" width="1" height="17" fill="#d5d5d5" />
<rect x="1067" y="492" width="1" height="17" fill="#d5d5d5" />
<rect x="1211" y="492" width="1" height="17" fill="#d5d5d5" />
<rect x="139" y="509" width="1" height="17" fill="#d5d5d5" />
<rect x="487" y="509" width="1" height="17" fill="#d5d5d5" />
<rect x="603" y="509" width="1" height="17" fill="#d5d5d5" />
<rect x="719" y="509" width="1" height="17" fill="#d5d5d5" />
<rect x="835" y="509" width="1" height="17" fill="#d5d5d5" />
<rect x="951" y="509" width="1" height="17" fill="#d5d5d5" />
<rect x="1067" y="509" width="1" height="17" fill="#d5d5d5" />
<rect x="1211" y="509" width="1" height="17" fill="#d5d5d5" />
<rect x="139" y="526" width="1" height="17" fill="#d5d5d5" />
<rect x="487" y="526" width="1" height="17" fill="#d5d5d5" />
<rect x="603" y="526" width="1" height="17" fill="#d5d5d5" />
<rect x="719" y="526" width="1" height="17" fill="#d5d5d5" />
<rect x="835" y="526" width="1" height="17" fill="#d5d5d5" />
<rect x="951" y="526" width="1" height="17" fill="#d5d5d5" />
<rect x="1067" y="526" width="1" height="17" fill="#d5d5d5" />
<rect x="1211" y="526" width="1" height="17" fill="#d5d5d5" />
<rect x="139" y="543" width="1" height="17" fill="#d5d5d5" />
<rect x="487" y="543" width="1" height="17" fill="#d5d5d5" />
<rect x="603" y="543" width="1" height="17" fill="#d5d5d5" />
<rect x="719" y="543" width="1" height="17" fill="#d5d5d5" />
<rect x="835" y="543" width="1" height="17" fill="#d5d5d5" />
<rect x="951" y="543" width="1" height="17" fill="#d5d5d5" />
<rect x="1067" y="543" width="1" height="17" fill="#d5d5d5" />
<rect x="1211" y="543" width="1" height="17" fill="#d5d5d5" />
<rect x="139" y="560" width="1" height="17" fill="#d5d5d5" />
<rect x="487" y="560" width="1" height="17" fill="#d5d5d5" />
<rect x="603" y="560" width="1" height="17" fill="#d5d5d5" />
<rect x="719" y="560" width="1" height="17" fill="#d5d5d5" />
<rect x="835" y="560" width="1" height="17" fill="#d5d5d5" />
<rect x="951" y="560" width="1" height="17" fill="#d5d5d5" />
<rect x="1067" y="560" width="1" height="17" fill="#d5d5d5" />
<rect x="1211" y="560" width="1" height="17" fill="#d5d5d5" />
<rect x="139" y="577" width="1" height="17" fill="#d5d5d5" />
<rect x="487" y="577" width="1" height="17" fill="#d5d5d5" />
<rect x="603" y="577" width="1" height="17" fill="#d5d5d5" />
<rect x="719" y="577" width="1" height="17" fill="#d5d5d5" />
<rect x="835" y="577" width="1" height="17" fill="#d5d5d5" />
<rect x="951" y="577" width="1" height="17" fill="#d5d5d5" />
<rect x="1067" y="577" width="1" height="17" fill="#d5d5d5" />
<rect x="1211" y="577" width="1" height="17" fill="#d5d5d5" />
<rect x="139" y="594" width="1" height="17" fill="#d5d5d5" />
<rect x="487" y="594" width="1" height="17" fill="#d5d5d5" />
<rect x="603" y="594" width="1" height="17" fill="#d5d5d5" />
<rect x="719" y="594" width="1" height="17" fill="#d5d5d5" />
<rect x="835" y="594" width="1" height="17" fill="#d5d5d5" />
<rect x="951" y="594" width="1" height="17" fill="#d5d5d5" />
<rect x="1067" y="594" width="1" height="17" fill="#d5d5d5" />
<rect x="1211" y="594" width="1" height="17" fill="#d5d5d5" />
<rect x="139" y="611" width="1" height="17" fill="#d5d5d5" />
<rect x="487" y="611" width="1" height="17" fill="#d5d5d5" />
<rect x="603" y="611" width="1" height="17" fill="#d5d5d5" />
<rect x="719" y="611" width="1" height="17" fill="#d5d5d5" />
<rect x="835" y="611" width="1" height="17" fill="#d5d5d5" />
<rect x="951" y="611" width="1" height="17" fill="#d5d5d5" />
<rect x="1067" y="611" width="1" height="17" fill="#d5d5d5" />
<rect x="1211" y="611" width="1" height="17" fill="#d5d5d5" />
<rect x="139" y="628" width="1" height="17" fill="#d5d5d5" />
<rect x="487" y="628" width="1" height="17" fill="#d5d5d5" />
<rect x="603" y="628" width="1" height="17" fill="#d5d5d5" />
<rect x="719" y="628" width="1" height="17" fill="#d5d5d5" />
<rect x="835" y="628" width="1" height="17" fill="#d5d5d5" />
<rect x="951" y="628" width="1" height="17" fill="#d5d5d5" />
<rect x="1067" y="628" width="1" height="17" fill="#d5d5d5" />
<rect x="1211" y="628" width="1" height="17" fill="#d5d5d5" />
<rect x="139" y="645" width="1" height="16" fill="#d5d5d5" />
<rect x="255" y="645" width="1" height="16" fill="#d5d5d5" />
<rect x="371" y="645" width="1" height="16" fill="#d5d5d5" />
<rect x="487" y="645" width="1" height="16" fill="#d5d5d5" />
<rect x="603" y="645" width="1" height="16" fill="#d5d5d5" />
<rect x="719" y="645" width="1" height="16" fill="#d5d5d5" />
<rect x="835" y="645" width="1" height="16" fill="#d5d5d5" />
<rect x="951" y="645" width="1" height="16" fill="#d5d5d5" />
<rect x="1067" y="645" width="1" height="16" fill="#d5d5d5" />
<rect x="1211" y="645" width="1" height="16" fill="#d5d5d5" />
<rect x="139" y="661" width="1" height="17" fill="#d5d5d5" />
<rect x="255" y="661" width="1" height="17" fill="#d5d5d5" />
<rect x="371" y="661" width="1" height="17" fill="#d5d5d5" />
<rect x="487" y="661" width="1" height="17" fill="#d5d5d5" />
<rect x="603" y="661" width="1" height="17" fill="#d5d5d5" />
<rect x="719" y="661" width="1" height="17" fill="#d5d5d5" />
<rect x="835" y="661" width="1" height="17" fill="#d5d5d5" />
<rect x="951" y="661" width="1" height="17" fill="#d5d5d5" />
<rect x="1067" y="661" width="1" height="17" fill="#d5d5d5" />
<rect x="1211" y="661" width="1" height="17" fill="#d5d5d5" />
<rect x="139" y="678" width="1" height="16" fill="#d5d5d5" />
<rect x="255" y="678" width="1" height="16" fill="#d5d5d5" />
<rect x="371" y="678" width="1" height="16" fill="#d5d5d5" />
<rect x="487" y="678" width="1" height="16" fill="#d5d5d5" />
<rect x="603" y="678" width="1" height="16" fill="#d5d5d5" />
<rect x="719" y="678" width="1" height="16" fill="#d5d5d5" />
<rect x="835" y="678" width="1" height="16" fill="#d5d5d5" />
<rect x="951" y="678" width="1" height="16" fill="#d5d5d5" />
<rect x="1067" y="678" width="1" height="16" fill="#d5d5d5" />
<rect x="1211" y="678" width="1" height="16" fill="#d5d5d5" />
<rect x="139" y="694" width="1" height="16" fill="#d5d5d5" />
<rect x="255" y="694" width="1" height="16" fill="#d5d5d5" />
<rect x="371" y="694" width="1" height="16" fill="#d5d5d5" />
<rect x="487" y="694" width="1" height="16" fill="#d5d5d5" />
<rect x="603" y="694" width="1" height="16" fill="#d5d5d5" />
<rect x="719" y="694" width="1" height="16" fill="#d5d5d5" />
<rect x="835" y="694" width="1" height="16" fill="#d5d5d5" />
<rect x="951" y="694" width="1" height="16" fill="#d5d5d5" />
<rect x="1067" y="694" width="1" height="16" fill="#d5d5d5" />
<rect x="1211" y="694" width="1" height="16" fill="#d5d5d5" />
<rect x="139" y="710" width="1" height="16" fill="#d5d5d5" />
<rect x="255" y="710" width="1" height="16" fill="#d5d5d5" />
<rect x="371" y="710" width="1" height="16" fill="#d5d5d5" />
<rect x="487" y="710" width="1" height="16" fill="#d5d5d5" />
<rect x="603" y="710" width="1" height="16" fill="#d5d5d5" />
<rect x="719" y="710" width="1" height="16" fill="#d5d5d5" />
<rect x="835" y="710" width="1" height="16" fill="#d5d5d5" />
<rect x="951" y="710" width="1" height="16" fill="#d5d5d5" />
<rect x="1067" y="710" width="1" height="16" fill="#d5d5d5" />
<rect x="1211" y="710" width="1" height="16" fill="#d5d5d5" />
<rect x="139" y="726" width="1" height="16" fill="#d5d5d5" />
<rect x="255" y="726" width="1" height="16" fill="#d5d5d5" />
<rect x="371" y="726" width="1" height="16" fill="#d5d5d5" />
<rect x="487" y="726" width="1" height="16" fill="#d5d5d5" />
<rect x="603" y="726" width="1" height="16" fill="#d5d5d5" />
<rect x="719" y="726" width="1" height="16" fill="#d5d5d5" />
<rect x="835" y="726" width="1" height="16" fill="#d5d5d5" />
<rect x="951" y="726" width="1" height="16" fill="#d5d5d5" />
<rect x="1067" y="726" width="1" height="16" fill="#d5d5d5" />
<rect x="1211" y="726" width="1" height="16" fill="#d5d5d5" />
<rect x="255" y="742" width="1" height="16" fill="#d5d5d5" />
<rect x="371" y="742" width="1" height="16" fill="#d5d5d5" />
<rect x="487" y="742" width="1" height="16" fill="#d5d5d5" />
<rect x="603" y="742" width="1" height="16" fill="#d5d5d5" />
<rect x="719" y="742" width="1" height="16" fill="#d5d5d5" />
<rect x="951" y="742" width="1" height="16" fill="#d5d5d5" />
<rect x="1211" y="742" width="1" height="16" fill="#d5d5d5" />
<rect x="603" y="758" width="1" height="17" fill="#d5d5d5" />
<rect x="719" y="758" width="1" height="17" fill="#d5d5d5" />
<rect x="951" y="758" width="1" height="17" fill="#d5d5d5" />
<rect x="1211" y="758" width="1" height="17" fill="#d5d5d5" />
<rect x="139" y="775" width="1" height="16" fill="#d5d5d5" />
<rect x="255" y="775" width="1" height="16" fill="#d5d5d5" />
<rect x="371" y="775" width="1" height="16" fill="#d5d5d5" />
<rect x="487" y="775" width="1" height="16" fill="#d5d5d5" />
<rect x="603" y="775" width="1" height="16" fill="#d5d5d5" />
<rect x="719" y="775" width="1" height="16" fill="#d5d5d5" />
<rect x="951" y="775" width="1" height="16" fill="#d5d5d5" />
<rect x="1211" y="775" width="1" height="16" fill="#d5d5d5" />
<rect x="139" y="791" width="1" height="16" fill="#d5d5d5" />
<rect x="255" y="791" width="1" height="16" fill="#d5d5d5" />
<rect x="371" y="791" width="1" height="16" fill="#d5d5d5" />
<rect x="487" y="791" width="1" height="16" fill="#d5d5d5" />
<rect x="603" y="791" width="1" height="16" fill="#d5d5d5" />
<rect x="719" y="791" width="1" height="16" fill="#d5d5d5" />
<rect x="951" y="791" width="1" height="16" fill="#d5d5d5" />
<rect x="1211" y="791" width="1" height="16" fill="#d5d5d5" />
<rect x="139" y="807" width="1" height="17" fill="#d5d5d5" />
<rect x="255" y="807" width="1" height="17" fill="#d5d5d5" />
<rect x="371" y="807" width="1" height="17" fill="#d5d5d5" />
<rect x="487" y="807" width="1" height="17" fill="#d5d5d5" />
<rect x="603" y="807" width="1" height="17" fill="#d5d5d5" />
<rect x="719" y="807" width="1" height="17" fill="#d5d5d5" />
<rect x="951" y="807" width="1" height="17" fill="#d5d5d5" />
<rect x="1211" y="807" width="1" height="17" fill="#d5d5d5" />
<rect x="139" y="824" width="1" height="16" fill="#d5d5d5" />
<rect x="255" y="824" width="1" height="16" fill="#d5d5d5" />
<rect x="371" y="824" width="1" height="16" fill="#d5d5d5" />
<rect x="487" y="824" width="1" height="16" fill="#d5d5d5" />
<rect x="603" y="824" width="1" height="16" fill="#d5d5d5" />
<rect x="719" y="824" width="1" height="16" fill="#d5d5d5" />
<rect x="835" y="824" width="1" height="16" fill="#d5d5d5" />
<rect x="951" y="824" width="1" height="16" fill="#d5d5d5" />
<rect x="1067" y="824" width="1" height="16" fill="#d5d5d5" />
<rect x="1211" y="824" width="1" height="16" fill="#d5d5d5" />
<rect x="139" y="840" width="1" height="16" fill="#d5d5d5" />
<rect x="255" y="840" width="1" height="16" fill="#d5d5d5" />
<rect x="371" y="840" width="1" height="16" fill="#d5d5d5" />
<rect x="487" y="840" width="1" height="16" fill="#d5d5d5" />
<rect x="603" y="840" width="1" height="16" fill="#d5d5d5" />
<rect x="719" y="840" width="1" height="16" fill="#d5d5d5" />
<rect x="835" y="840" width="1" height="16" fill="#d5d5d5" />
<rect x="951" y="840" width="1" height="16" fill="#d5d5d5" />
<rect x="1067" y="840" width="1" height="16" fill="#d5d5d5" />
<rect x="1211" y="840" width="1" height="16" fill="#d5d5d5" />
<rect x="139" y="856" width="1" height="10" fill="#d5d5d5" />
<rect x="255" y="856" width="1" height="10" fill="#d5d5d5" />
<rect x="371" y="856" width="1" height="10" fill="#d5d5d5" />
<rect x="487" y="856" width="1" height="10" fill="#d5d5d5" />
<rect x="603" y="856" width="1" height="10" fill="#d5d5d5" />
<rect x="719" y="856" width="1" height="10" fill="#d5d5d5" />
<rect x="835" y="856" width="1" height="10" fill="#d5d5d5" />
<rect x="951" y="856" width="1" height="10" fill="#d5d5d5" />
<rect x="1067" y="856" width="1" height="10" fill="#d5d5d5" />
<rect x="1211" y="856" width="1" height="10" fill="#d5d5d5" />
<rect x="22" y="186" width="583" height="3" fill="#000" />
<rect x="22" y="276" width="583" height="3" fill="#000" />
<rect x="22" y="186" width="3" height="93" fill="#000" />
<rect x="602" y="186" width="3" height="93" fill="#000" />
<rect x="834" y="260" width="379" height="3" fill="#000" />
<rect x="834" y="276" width="379" height="3" fill="#000" />
<rect x="834" y="260" width="3" height="19" fill="#000" />
<rect x="1210" y="260" width="3" height="19" fill="#000" />
<rect x="22" y="324" width="1191" height="3" fill="#000" />
<rect x="22" y="440" width="1191" height="3" fill="#000" />
<rect x="22" y="324" width="3" height="119" fill="#000" />
<rect x="1210" y="324" width="3" height="119" fill="#000" />
<rect x="22" y="440" width="1191" height="3" fill="#000" />
<rect x="22" y="457" width="1191" height="3" fill="#000" />
<rect x="22" y="440" width="3" height="20" fill="#000" />
<rect x="1210" y="440" width="3" height="20" fill="#000" />
<rect x="22" y="473" width="1191" height="3" fill="#000" />
<rect x="22" y="490" width="1191" height="3" fill="#000" />
<rect x="22" y="473" width="3" height="20" fill="#000" />
<rect x="1210" y="473" width="3" height="20" fill="#000" />
<rect x="22" y="659" width="1191" height="3" fill="#000" />
<rect x="22" y="740" width="583" height="3" fill="#000" />
<rect x="22" y="822" width="583" height="3" fill="#000" />
<rect x="22" y="740" width="3" height="85" fill="#000" />
<rect x="602" y="740" width="3" height="85" fill="#000" />
<rect x="718" y="805" width="495" height="3" fill="#000" />
<rect x="718" y="822" width="495" height="3" fill="#000" />
<rect x="718" y="805" width="3" height="20" fill="#000" />
<rect x="1210" y="805" width="3" height="20" fill="#000" />
<rect x="22" y="838" width="1191" height="3" fill="#000" />
<text x="258" y="207" font-size="12" fill="#000" text-anchor="start" textLength="182" lengthAdjust="spacingAndGlyphs" >eFactory Software ERP en la Nube</text>
<text x="965.5" y="208" font-size="15.8" font-weight="bold" fill="#000" text-anchor="middle" textLength="88.3" lengthAdjust="spacingAndGlyphs" >COTIZACIÓN</text>
<text x="258.5" y="226" font-size="12" fill="#000" text-anchor="start" textLength="17.4" lengthAdjust="spacingAndGlyphs" >Rif:</text>
<text x="374" y="226" font-size="12" fill="#000" text-anchor="start" textLength="88.6" lengthAdjust="spacingAndGlyphs" >J-0102030405-9</text>
<text x="838.5" y="226" font-size="11.5" font-weight="bold" fill="#000" text-anchor="start" textLength="109.5" lengthAdjust="spacingAndGlyphs" >Fecha de Impresión:</text>
<text x="1070" y="226" font-size="12" fill="#000" text-anchor="start" textLength="65" lengthAdjust="spacingAndGlyphs" >04/06/2021</text>
<text x="258.5" y="242" font-size="12" fill="#000" text-anchor="start" textLength="55" lengthAdjust="spacingAndGlyphs" >Dirección:</text>
<text x="374" y="242" font-size="12" fill="#000" text-anchor="start" textLength="191" lengthAdjust="spacingAndGlyphs" >10470 NW 26 Street, Doral, Florida</text>
<text x="838.5" y="242" font-size="11.5" font-weight="bold" fill="#000" text-anchor="start" textLength="103.9" lengthAdjust="spacingAndGlyphs" >Hora de Impresión:</text>
<text x="1070" y="242" font-size="12" fill="#000" text-anchor="start" textLength="68.9" lengthAdjust="spacingAndGlyphs" >05:18:51 PM</text>
<text x="258.5" y="258" font-size="12" fill="#000" text-anchor="start" textLength="55" lengthAdjust="spacingAndGlyphs" >Teléfonos:</text>
<text x="374" y="258" font-size="12" fill="#000" text-anchor="start" textLength="80" lengthAdjust="spacingAndGlyphs" >0241-8963254</text>
<text x="838.5" y="258" font-size="11.5" font-weight="bold" fill="#000" text-anchor="start" textLength="96.2" lengthAdjust="spacingAndGlyphs" >Fecha de Emisión:</text>
<text x="1070" y="258" font-size="12" fill="#000" text-anchor="start" textLength="65.5" lengthAdjust="spacingAndGlyphs" >11/11/2020</text>
<text x="838.5" y="274" font-size="11.5" font-weight="bold" fill="#000" text-anchor="start" textLength="77.1" lengthAdjust="spacingAndGlyphs" >Cotización No:</text>
<text x="1070" y="274" font-size="11.5" font-weight="bold" fill="#000" text-anchor="start" >4</text>
<text x="26.5" y="339" font-size="12" fill="#000" text-anchor="start" textLength="40.6" lengthAdjust="spacingAndGlyphs" >Cliente:</text>
<text x="258.5" y="339" font-size="11.5" font-weight="bold" fill="#000" text-anchor="start" textLength="20.3" lengthAdjust="spacingAndGlyphs" >958</text>
<text x="374.5" y="339" font-size="11.5" font-weight="bold" fill="#000" text-anchor="start" textLength="69.4" lengthAdjust="spacingAndGlyphs" >Cliente 0958</text>
<text x="26.5" y="372" font-size="12" fill="#000" text-anchor="start" textLength="28.4" lengthAdjust="spacingAndGlyphs" >R.I.F.:</text>
<text x="258.5" y="372" font-size="12" fill="#000" text-anchor="start" textLength="29.4" lengthAdjust="spacingAndGlyphs" >El RIF</text>
<text x="374.5" y="372" font-size="12" fill="#000" text-anchor="start" textLength="29.9" lengthAdjust="spacingAndGlyphs" >N.I.T.:</text>
<text x="490" y="372" font-size="12" fill="#000" text-anchor="start" textLength="29.9" lengthAdjust="spacingAndGlyphs" >El RIF</text>
<text x="26.5" y="405" font-size="12" fill="#000" text-anchor="start" textLength="55.4" lengthAdjust="spacingAndGlyphs" >Dirección:</text>
<text x="258.5" y="405" font-size="12" fill="#000" text-anchor="start" textLength="217" lengthAdjust="spacingAndGlyphs" >La direccion, Calle, Avenida, CC, Oficina</text>
<text x="26.5" y="438" font-size="12" fill="#000" text-anchor="start" textLength="55.4" lengthAdjust="spacingAndGlyphs" >Teléfonos:</text>
<text x="258.5" y="438" font-size="12" fill="#000" text-anchor="start" textLength="65.8" lengthAdjust="spacingAndGlyphs" >Numero Telf</text>
<text x="374.5" y="438" font-size="12" fill="#000" text-anchor="start" textLength="22.7" lengthAdjust="spacingAndGlyphs" >FAX:</text>
<text x="26.5" y="455" font-size="12" fill="#000" text-anchor="start" textLength="104.3" lengthAdjust="spacingAndGlyphs" >Condición de Pago:</text>
<text x="142.5" y="455" font-size="12" fill="#000" text-anchor="start" textLength="53" lengthAdjust="spacingAndGlyphs" >CONTADO</text>
<text x="601" y="455" font-size="12" fill="#000" text-anchor="end" textLength="70.2" lengthAdjust="spacingAndGlyphs" >Vencimiento:</text>
<text x="722.4" y="455" font-size="12" fill="#000" text-anchor="start" textLength="65.5" lengthAdjust="spacingAndGlyphs" >11/11/2020</text>
<text x="948.5" y="455" font-size="12" fill="#000" text-anchor="end" textLength="39.6" lengthAdjust="spacingAndGlyphs" >Asesor:</text>
<text x="954.1" y="455" font-size="12" fill="#000" text-anchor="start" textLength="89.2" lengthAdjust="spacingAndGlyphs" >Vendedor DBrito</text>
<text x="81.7" y="488" font-size="11.5" font-weight="bold" fill="#000" text-anchor="middle" textLength="35.6" lengthAdjust="spacingAndGlyphs" >Código</text>
<text x="313" y="488" font-size="11.5" font-weight="bold" fill="#000" text-anchor="middle" textLength="61.7" lengthAdjust="spacingAndGlyphs" >Descripción</text>
<text x="544.8" y="488" font-size="11.5" font-weight="bold" fill="#000" text-anchor="middle" textLength="36.6" lengthAdjust="spacingAndGlyphs" >Unidad</text>
<text x="660.8" y="488" font-size="11.5" font-weight="bold" fill="#000" text-anchor="middle" textLength="47.1" lengthAdjust="spacingAndGlyphs" >Cantidad</text>
<text x="777.8" y="488" font-size="11.5" font-weight="bold" fill="#000" text-anchor="middle" textLength="63.3" lengthAdjust="spacingAndGlyphs" >Precio Unit.</text>
<text x="893.6" y="488" font-size="11.5" font-weight="bold" fill="#000" text-anchor="middle" textLength="32.2" lengthAdjust="spacingAndGlyphs" >% DES</text>
<text x="1009.5" y="488" font-size="11.5" font-weight="bold" fill="#000" text-anchor="middle" textLength="33.1" lengthAdjust="spacingAndGlyphs" >% IMP</text>
<text x="1139" y="488" font-size="11.5" font-weight="bold" fill="#000" text-anchor="middle" textLength="26.8" lengthAdjust="spacingAndGlyphs" >Total</text>
<text x="26.8" y="505" font-size="12" fill="#000" text-anchor="start" textLength="53.5" lengthAdjust="spacingAndGlyphs" >PT001110</text>
<text x="142.5" y="505" font-size="12" fill="#000" text-anchor="start" textLength="189.5" lengthAdjust="spacingAndGlyphs" >Descripción del Artículo PT001110</text>
<text x="545.6" y="505" font-size="12" fill="#000" text-anchor="middle" textLength="58.8" lengthAdjust="spacingAndGlyphs" >CAJ24*380</text>
<text x="661.8" y="505" font-size="12" fill="#000" text-anchor="middle" textLength="20.1" lengthAdjust="spacingAndGlyphs" >120</text>
<text x="832.7" y="505" font-size="12" fill="#000" text-anchor="end" textLength="71" lengthAdjust="spacingAndGlyphs" >6.680.000,00</text>
<text x="893" y="505" font-size="12" fill="#000" text-anchor="middle" >0,00</text>
<text x="1009" y="505" font-size="12" fill="#000" text-anchor="middle" >16,00</text>
<text x="1209" y="505" font-size="12" fill="#000" text-anchor="end" textLength="85.4" lengthAdjust="spacingAndGlyphs" >801.600.000,00</text>
<text x="26.8" y="522" font-size="12" fill="#000" text-anchor="start" textLength="53.5" lengthAdjust="spacingAndGlyphs" >PT001618</text>
<text x="142.5" y="522" font-size="12" fill="#000" text-anchor="start" textLength="189.5" lengthAdjust="spacingAndGlyphs" >Descripción del Artículo PT001618</text>
<text x="545.6" y="522" font-size="12" fill="#000" text-anchor="middle" textLength="58.8" lengthAdjust="spacingAndGlyphs" >CAJ24*300</text>
<text x="661.8" y="522" font-size="12" fill="#000" text-anchor="middle" textLength="13.4" lengthAdjust="spacingAndGlyphs" >30</text>
<text x="832.7" y="522" font-size="12" fill="#000" text-anchor="end" textLength="71" lengthAdjust="spacingAndGlyphs" >6.000.000,00</text>
<text x="893" y="522" font-size="12" fill="#000" text-anchor="middle" >0,00</text>
<text x="1009" y="522" font-size="12" fill="#000" text-anchor="middle" >16,00</text>
<text x="1209" y="522" font-size="12" fill="#000" text-anchor="end" textLength="85.4" lengthAdjust="spacingAndGlyphs" >180.000.000,00</text>
<text x="26.8" y="539" font-size="12" fill="#000" text-anchor="start" textLength="53.5" lengthAdjust="spacingAndGlyphs" >PT001627</text>
<text x="142.5" y="539" font-size="12" fill="#000" text-anchor="start" textLength="189.5" lengthAdjust="spacingAndGlyphs" >Descripción del Artículo PT001627</text>
<text x="545.6" y="539" font-size="12" fill="#000" text-anchor="middle" textLength="58.8" lengthAdjust="spacingAndGlyphs" >CAJ24*300</text>
<text x="661.8" y="539" font-size="12" fill="#000" text-anchor="middle" textLength="13.4" lengthAdjust="spacingAndGlyphs" >30</text>
<text x="832.7" y="539" font-size="12" fill="#000" text-anchor="end" textLength="71" lengthAdjust="spacingAndGlyphs" >5.920.000,00</text>
<text x="893" y="539" font-size="12" fill="#000" text-anchor="middle" >0,00</text>
<text x="1009" y="539" font-size="12" fill="#000" text-anchor="middle" >16,00</text>
<text x="1209" y="539" font-size="12" fill="#000" text-anchor="end" textLength="85.4" lengthAdjust="spacingAndGlyphs" >177.600.000,00</text>
<text x="26.8" y="556" font-size="12" fill="#000" text-anchor="start" textLength="53.5" lengthAdjust="spacingAndGlyphs" >PT001645</text>
<text x="142.5" y="556" font-size="12" fill="#000" text-anchor="start" textLength="189.5" lengthAdjust="spacingAndGlyphs" >Descripción del Artículo PT001645</text>
<text x="545.6" y="556" font-size="12" fill="#000" text-anchor="middle" textLength="58.8" lengthAdjust="spacingAndGlyphs" >CAJ24*300</text>
<text x="661.8" y="556" font-size="12" fill="#000" text-anchor="middle" textLength="13.4" lengthAdjust="spacingAndGlyphs" >15</text>
<text x="832.7" y="556" font-size="12" fill="#000" text-anchor="end" textLength="71" lengthAdjust="spacingAndGlyphs" >5.500.000,00</text>
<text x="893" y="556" font-size="12" fill="#000" text-anchor="middle" >0,00</text>
<text x="1009" y="556" font-size="12" fill="#000" text-anchor="middle" >16,00</text>
<text x="1209" y="556" font-size="12" fill="#000" text-anchor="end" textLength="78.6" lengthAdjust="spacingAndGlyphs" >82.500.000,00</text>
<text x="26.8" y="573" font-size="12" fill="#000" text-anchor="start" textLength="53.5" lengthAdjust="spacingAndGlyphs" >PT001665</text>
<text x="142.5" y="573" font-size="12" fill="#000" text-anchor="start" textLength="189.5" lengthAdjust="spacingAndGlyphs" >Descripción del Artículo PT001665</text>
<text x="545.6" y="573" font-size="12" fill="#000" text-anchor="middle" textLength="58.8" lengthAdjust="spacingAndGlyphs" >CAJ24*300</text>
<text x="661.8" y="573" font-size="12" fill="#000" text-anchor="middle" textLength="13.4" lengthAdjust="spacingAndGlyphs" >15</text>
<text x="832.7" y="573" font-size="12" fill="#000" text-anchor="end" textLength="71" lengthAdjust="spacingAndGlyphs" >5.500.000,00</text>
<text x="893" y="573" font-size="12" fill="#000" text-anchor="middle" >0,00</text>
<text x="1009" y="573" font-size="12" fill="#000" text-anchor="middle" >16,00</text>
<text x="1209" y="573" font-size="12" fill="#000" text-anchor="end" textLength="78.6" lengthAdjust="spacingAndGlyphs" >82.500.000,00</text>
<text x="26.8" y="590" font-size="12" fill="#000" text-anchor="start" textLength="53.5" lengthAdjust="spacingAndGlyphs" >PT001668</text>
<text x="142.5" y="590" font-size="12" fill="#000" text-anchor="start" textLength="189.5" lengthAdjust="spacingAndGlyphs" >Descripción del Artículo PT001668</text>
<text x="545.6" y="590" font-size="12" fill="#000" text-anchor="middle" textLength="58.8" lengthAdjust="spacingAndGlyphs" >CAJ24*200</text>
<text x="661.8" y="590" font-size="12" fill="#000" text-anchor="middle" textLength="13.4" lengthAdjust="spacingAndGlyphs" >15</text>
<text x="832.7" y="590" font-size="12" fill="#000" text-anchor="end" textLength="71" lengthAdjust="spacingAndGlyphs" >4.640.000,00</text>
<text x="893" y="590" font-size="12" fill="#000" text-anchor="middle" >0,00</text>
<text x="1009" y="590" font-size="12" fill="#000" text-anchor="middle" >16,00</text>
<text x="1209" y="590" font-size="12" fill="#000" text-anchor="end" textLength="78.6" lengthAdjust="spacingAndGlyphs" >69.600.000,00</text>
<text x="26.8" y="607" font-size="12" fill="#000" text-anchor="start" textLength="53.5" lengthAdjust="spacingAndGlyphs" >PT001200</text>
<text x="142.5" y="607" font-size="12" fill="#000" text-anchor="start" textLength="189.5" lengthAdjust="spacingAndGlyphs" >Descripción del Artículo PT001200</text>
<text x="545.6" y="607" font-size="12" fill="#000" text-anchor="middle" textLength="58.8" lengthAdjust="spacingAndGlyphs" >CAJ24*200</text>
<text x="661.8" y="607" font-size="12" fill="#000" text-anchor="middle" textLength="13.4" lengthAdjust="spacingAndGlyphs" >25</text>
<text x="832.7" y="607" font-size="12" fill="#000" text-anchor="end" textLength="71" lengthAdjust="spacingAndGlyphs" >5.410.000,00</text>
<text x="893" y="607" font-size="12" fill="#000" text-anchor="middle" >0,00</text>
<text x="1009" y="607" font-size="12" fill="#000" text-anchor="middle" >16,00</text>
<text x="1209" y="607" font-size="12" fill="#000" text-anchor="end" textLength="85.4" lengthAdjust="spacingAndGlyphs" >135.250.000,00</text>
<text x="26.8" y="624" font-size="12" fill="#000" text-anchor="start" textLength="53.5" lengthAdjust="spacingAndGlyphs" >PT001130</text>
<text x="142.5" y="624" font-size="12" fill="#000" text-anchor="start" textLength="189.5" lengthAdjust="spacingAndGlyphs" >Descripción del Artículo PT001130</text>
<text x="545.6" y="624" font-size="12" fill="#000" text-anchor="middle" textLength="58.8" lengthAdjust="spacingAndGlyphs" >CAJ24*190</text>
<text x="661.8" y="624" font-size="12" fill="#000" text-anchor="middle" textLength="13.4" lengthAdjust="spacingAndGlyphs" >25</text>
<text x="832.7" y="624" font-size="12" fill="#000" text-anchor="end" textLength="71" lengthAdjust="spacingAndGlyphs" >4.700.000,00</text>
<text x="893" y="624" font-size="12" fill="#000" text-anchor="middle" >0,00</text>
<text x="1009" y="624" font-size="12" fill="#000" text-anchor="middle" >16,00</text>
<text x="1209" y="624" font-size="12" fill="#000" text-anchor="end" textLength="85.4" lengthAdjust="spacingAndGlyphs" >117.500.000,00</text>
<text x="26.8" y="641" font-size="12" fill="#000" text-anchor="start" textLength="53.5" lengthAdjust="spacingAndGlyphs" >PT001140</text>
<text x="142.5" y="641" font-size="12" fill="#000" text-anchor="start" textLength="189.5" lengthAdjust="spacingAndGlyphs" >Descripción del Artículo PT001140</text>
<text x="545.6" y="641" font-size="12" fill="#000" text-anchor="middle" textLength="58.8" lengthAdjust="spacingAndGlyphs" >CAJ24*190</text>
<text x="661.8" y="641" font-size="12" fill="#000" text-anchor="middle" textLength="13.4" lengthAdjust="spacingAndGlyphs" >25</text>
<text x="832.7" y="641" font-size="12" fill="#000" text-anchor="end" textLength="71" lengthAdjust="spacingAndGlyphs" >4.700.000,00</text>
<text x="893" y="641" font-size="12" fill="#000" text-anchor="middle" >0,00</text>
<text x="1009" y="641" font-size="12" fill="#000" text-anchor="middle" >16,00</text>
<text x="1209" y="641" font-size="12" fill="#000" text-anchor="end" textLength="85.4" lengthAdjust="spacingAndGlyphs" >117.500.000,00</text>
<text x="137" y="673" font-size="12.5" font-weight="bold" fill="#000" text-anchor="end" >9</text>
<text x="142.4" y="673" font-size="12.5" font-weight="bold" fill="#000" text-anchor="start" textLength="56.5" lengthAdjust="spacingAndGlyphs" >Registros</text>
<text x="25.7" y="754" font-size="11.5" font-weight="bold" fill="#000" text-anchor="start" textLength="83" lengthAdjust="spacingAndGlyphs" >Observaciones:</text>
<text x="949" y="754" font-size="11.5" font-weight="bold" fill="#000" text-anchor="end" textLength="50" lengthAdjust="spacingAndGlyphs" >Subtotal:</text>
<text x="1209" y="754" font-size="12" fill="#000" text-anchor="end" textLength="96" lengthAdjust="spacingAndGlyphs" >1.764.050.000,00</text>
<text x="949" y="771" font-size="11.5" font-weight="bold" fill="#000" text-anchor="end" textLength="64" lengthAdjust="spacingAndGlyphs" >Descuentos:</text>
<text x="1209" y="771" font-size="12" fill="#000" text-anchor="end" textLength="24" lengthAdjust="spacingAndGlyphs" >0,00</text>
<text x="949" y="787" font-size="11.5" font-weight="bold" fill="#000" text-anchor="end" textLength="53" lengthAdjust="spacingAndGlyphs" >Recargos:</text>
<text x="1209" y="787" font-size="12" fill="#000" text-anchor="end" textLength="24" lengthAdjust="spacingAndGlyphs" >0,00</text>
<text x="949" y="803" font-size="11.5" font-weight="bold" fill="#000" text-anchor="end" textLength="32" lengthAdjust="spacingAndGlyphs" >I.V.A.:</text>
<text x="1209" y="803" font-size="12" fill="#000" text-anchor="end" textLength="85.4" lengthAdjust="spacingAndGlyphs" >282.248.000,00</text>
<text x="949" y="820" font-size="11.5" font-weight="bold" fill="#000" text-anchor="end" textLength="37" lengthAdjust="spacingAndGlyphs" >TOTAL</text>
<text x="1209" y="820" font-size="12" fill="#000" text-anchor="end" textLength="100" lengthAdjust="spacingAndGlyphs" >2.046.298.000,00</text>
<path d="M604,492 h4 l-4,4z" fill="#217a3c"/>
<path d="M604,509 h4 l-4,4z" fill="#217a3c"/>
<path d="M604,526 h4 l-4,4z" fill="#217a3c"/>
<path d="M604,543 h4 l-4,4z" fill="#217a3c"/>
<path d="M604,560 h4 l-4,4z" fill="#217a3c"/>
<path d="M604,577 h4 l-4,4z" fill="#217a3c"/>
<path d="M604,594 h4 l-4,4z" fill="#217a3c"/>
<path d="M604,611 h4 l-4,4z" fill="#217a3c"/>
<path d="M604,628 h4 l-4,4z" fill="#217a3c"/>
<path d="M256,327 h4 l-4,4z" fill="#217a3c"/>
<path d="M1068,263 h4 l-4,4z" fill="#217a3c"/>
<path d="M24,662 h4 l-4,4z" fill="#217a3c"/>
<rect x="1" y="172" width="1230" height="15" fill="#e6e6e6" />
<rect x="1" y="172" width="22" height="694" fill="#e6e6e6" />
<rect x="24" y="172" width="115" height="14" fill="#d2d2d2" />
<rect x="1" y="188" width="22" height="25" fill="#d2d2d2" />
<rect x="1" y="187" width="1230" height="1" fill="#ababab" />
<rect x="23" y="172" width="1" height="694" fill="#ababab" />
<rect x="139" y="172" width="1" height="15" fill="#bcbcbc" />
<rect x="255" y="172" width="1" height="15" fill="#bcbcbc" />
<rect x="371" y="172" width="1" height="15" fill="#bcbcbc" />
<rect x="487" y="172" width="1" height="15" fill="#bcbcbc" />
<rect x="603" y="172" width="1" height="15" fill="#bcbcbc" />
<rect x="719" y="172" width="1" height="15" fill="#bcbcbc" />
<rect x="835" y="172" width="1" height="15" fill="#bcbcbc" />
<rect x="951" y="172" width="1" height="15" fill="#bcbcbc" />
<rect x="1067" y="172" width="1" height="15" fill="#bcbcbc" />
<rect x="1211" y="172" width="1" height="15" fill="#bcbcbc" />
<rect x="1" y="213" width="22" height="1" fill="#bcbcbc" />
<rect x="1" y="229" width="22" height="1" fill="#bcbcbc" />
<rect x="1" y="245" width="22" height="1" fill="#bcbcbc" />
<rect x="1" y="261" width="22" height="1" fill="#bcbcbc" />
<rect x="1" y="277" width="22" height="1" fill="#bcbcbc" />
<rect x="1" y="293" width="22" height="1" fill="#bcbcbc" />
<rect x="1" y="309" width="22" height="1" fill="#bcbcbc" />
<rect x="1" y="325" width="22" height="1" fill="#bcbcbc" />
<rect x="1" y="342" width="22" height="1" fill="#bcbcbc" />
<rect x="1" y="358" width="22" height="1" fill="#bcbcbc" />
<rect x="1" y="375" width="22" height="1" fill="#bcbcbc" />
<rect x="1" y="391" width="22" height="1" fill="#bcbcbc" />
<rect x="1" y="408" width="22" height="1" fill="#bcbcbc" />
<rect x="1" y="424" width="22" height="1" fill="#bcbcbc" />
<rect x="1" y="441" width="22" height="1" fill="#bcbcbc" />
<rect x="1" y="458" width="22" height="1" fill="#bcbcbc" />
<rect x="1" y="474" width="22" height="1" fill="#bcbcbc" />
<rect x="1" y="491" width="22" height="1" fill="#bcbcbc" />
<rect x="1" y="508" width="22" height="1" fill="#bcbcbc" />
<rect x="1" y="525" width="22" height="1" fill="#bcbcbc" />
<rect x="1" y="542" width="22" height="1" fill="#bcbcbc" />
<rect x="1" y="559" width="22" height="1" fill="#bcbcbc" />
<rect x="1" y="576" width="22" height="1" fill="#bcbcbc" />
<rect x="1" y="593" width="22" height="1" fill="#bcbcbc" />
<rect x="1" y="610" width="22" height="1" fill="#bcbcbc" />
<rect x="1" y="627" width="22" height="1" fill="#bcbcbc" />
<rect x="1" y="644" width="22" height="1" fill="#bcbcbc" />
<rect x="1" y="660" width="22" height="1" fill="#bcbcbc" />
<rect x="1" y="677" width="22" height="1" fill="#bcbcbc" />
<rect x="1" y="693" width="22" height="1" fill="#bcbcbc" />
<rect x="1" y="709" width="22" height="1" fill="#bcbcbc" />
<rect x="1" y="725" width="22" height="1" fill="#bcbcbc" />
<rect x="1" y="741" width="22" height="1" fill="#bcbcbc" />
<rect x="1" y="757" width="22" height="1" fill="#bcbcbc" />
<rect x="1" y="774" width="22" height="1" fill="#bcbcbc" />
<rect x="1" y="790" width="22" height="1" fill="#bcbcbc" />
<rect x="1" y="806" width="22" height="1" fill="#bcbcbc" />
<rect x="1" y="823" width="22" height="1" fill="#bcbcbc" />
<rect x="1" y="839" width="22" height="1" fill="#bcbcbc" />
<rect x="1" y="855" width="22" height="1" fill="#bcbcbc" />
<path d="M19,184 v-9 l-9,9z" fill="#b4b4b4"/>
<text x="81.5" y="184" font-size="11" fill="#217346" text-anchor="middle" >A</text>
<text x="197.5" y="184" font-size="11" fill="#262626" text-anchor="middle" >B</text>
<text x="313.5" y="184" font-size="11" fill="#262626" text-anchor="middle" >C</text>
<text x="429.5" y="184" font-size="11" fill="#262626" text-anchor="middle" >D</text>
<text x="545.5" y="184" font-size="11" fill="#262626" text-anchor="middle" >E</text>
<text x="661.5" y="184" font-size="11" fill="#262626" text-anchor="middle" >F</text>
<text x="777.5" y="184" font-size="11" fill="#262626" text-anchor="middle" >G</text>
<text x="893.5" y="184" font-size="11" fill="#262626" text-anchor="middle" >H</text>
<text x="1009.5" y="184" font-size="11" fill="#262626" text-anchor="middle" >I</text>
<text x="1139.5" y="184" font-size="11" fill="#262626" text-anchor="middle" >J</text>
<text x="12.5" y="208" font-size="11" fill="#217346" text-anchor="middle" >1</text>
<text x="12.5" y="226" font-size="11" fill="#262626" text-anchor="middle" >2</text>
<text x="12.5" y="242" font-size="11" fill="#262626" text-anchor="middle" >3</text>
<text x="12.5" y="258" font-size="11" fill="#262626" text-anchor="middle" >4</text>
<text x="12.5" y="274" font-size="11" fill="#262626" text-anchor="middle" >5</text>
<text x="12.5" y="290" font-size="11" fill="#262626" text-anchor="middle" >6</text>
<text x="12.5" y="306" font-size="11" fill="#262626" text-anchor="middle" >7</text>
<text x="12.5" y="322" font-size="11" fill="#262626" text-anchor="middle" >8</text>
<text x="12.5" y="339" font-size="11" fill="#262626" text-anchor="middle" >9</text>
<text x="12.5" y="355" font-size="11" fill="#262626" text-anchor="middle" >10</text>
<text x="12.5" y="372" font-size="11" fill="#262626" text-anchor="middle" >11</text>
<text x="12.5" y="388" font-size="11" fill="#262626" text-anchor="middle" >12</text>
<text x="12.5" y="405" font-size="11" fill="#262626" text-anchor="middle" >13</text>
<text x="12.5" y="421" font-size="11" fill="#262626" text-anchor="middle" >14</text>
<text x="12.5" y="438" font-size="11" fill="#262626" text-anchor="middle" >15</text>
<text x="12.5" y="455" font-size="11" fill="#262626" text-anchor="middle" >16</text>
<text x="12.5" y="471" font-size="11" fill="#262626" text-anchor="middle" >17</text>
<text x="12.5" y="488" font-size="11" fill="#262626" text-anchor="middle" >18</text>
<text x="12.5" y="505" font-size="11" fill="#262626" text-anchor="middle" >19</text>
<text x="12.5" y="522" font-size="11" fill="#262626" text-anchor="middle" >20</text>
<text x="12.5" y="539" font-size="11" fill="#262626" text-anchor="middle" >21</text>
<text x="12.5" y="556" font-size="11" fill="#262626" text-anchor="middle" >22</text>
<text x="12.5" y="573" font-size="11" fill="#262626" text-anchor="middle" >23</text>
<text x="12.5" y="590" font-size="11" fill="#262626" text-anchor="middle" >24</text>
<text x="12.5" y="607" font-size="11" fill="#262626" text-anchor="middle" >25</text>
<text x="12.5" y="624" font-size="11" fill="#262626" text-anchor="middle" >26</text>
<text x="12.5" y="641" font-size="11" fill="#262626" text-anchor="middle" >27</text>
<text x="12.5" y="657" font-size="11" fill="#262626" text-anchor="middle" >28</text>
<text x="12.5" y="673" font-size="11" fill="#262626" text-anchor="middle" >29</text>
<text x="12.5" y="690" font-size="11" fill="#262626" text-anchor="middle" >30</text>
<text x="12.5" y="706" font-size="11" fill="#262626" text-anchor="middle" >31</text>
<text x="12.5" y="722" font-size="11" fill="#262626" text-anchor="middle" >32</text>
<text x="12.5" y="738" font-size="11" fill="#262626" text-anchor="middle" >33</text>
<text x="12.5" y="754" font-size="11" fill="#262626" text-anchor="middle" >34</text>
<text x="12.5" y="771" font-size="11" fill="#262626" text-anchor="middle" >35</text>
<text x="12.5" y="787" font-size="11" fill="#262626" text-anchor="middle" >36</text>
<text x="12.5" y="803" font-size="11" fill="#262626" text-anchor="middle" >37</text>
<text x="12.5" y="820" font-size="11" fill="#262626" text-anchor="middle" >38</text>
<text x="12.5" y="836" font-size="11" fill="#262626" text-anchor="middle" >39</text>
<text x="12.5" y="852" font-size="11" fill="#262626" text-anchor="middle" >40</text>
<text x="12.5" y="868" font-size="11" fill="#262626" text-anchor="middle" >41</text>
<rect x="1231" y="187" width="1" height="680" fill="#ababab" />
<rect x="24" y="188" width="115" height="1" fill="#fff" />
<rect x="24" y="188" width="1" height="25" fill="#fff" />
<rect x="22" y="186" width="119" height="2" fill="#217346" />
<rect x="22" y="213" width="114" height="2" fill="#217346" />
<rect x="22" y="186" width="2" height="29" fill="#217346" />
<rect x="139" y="186" width="2" height="24" fill="#217346" />
<rect x="136" y="210" width="7" height="7" fill="#fff" />
<rect x="137" y="211" width="5" height="5" fill="#217346" />
<rect x="1232" y="172" width="21" height="695" fill="#e6e6e6" />
<rect x="1235.5" y="174.5" width="14" height="13" fill="#fff" stroke="#ababab"/><path d="M1238.5,183 h8 l-4,-4z" fill="#777"/>
<rect x="1235.5" y="189.5" width="14" height="645" fill="#fff" stroke="#ababab"/>
<rect x="1236" y="835" width="13" height="17" fill="#dadada" />
<rect x="1235.5" y="852.5" width="14" height="13" fill="#fff" stroke="#ababab"/><path d="M1238.5,857 h8 l-4,4z" fill="#777"/>
<rect x="1" y="866" width="1252" height="28" fill="#e6e6e6" />
<rect x="1" y="866" width="1231" height="1" fill="#ababab" />
<path d="M33,876 v7 l-4,-3.5z M57,876 v7 l4,-3.5z" fill="#bbbbbb"/>
<rect x="101" y="866" width="60" height="24" fill="#fff"/><rect x="101" y="866" width="1" height="24" fill="#ababab"/><rect x="160" y="866" width="1" height="24" fill="#ababab"/>
<rect x="101" y="889" width="60" height="2" fill="#217346" />
<text x="131" y="884" font-size="12.7" font-weight="bold" fill="#217346" text-anchor="middle" textLength="34.5" lengthAdjust="spacingAndGlyphs" >Hoja1</text>
<circle cx="202" cy="880" r="7.5" fill="none" stroke="#777" stroke-width="1.2"/><path d="M198,880 h8 M202,876 v8" stroke="#777" stroke-width="1.6"/>
<rect x="752" y="873" width="2" height="2" fill="#9a9a9a" />
<rect x="752" y="877" width="2" height="2" fill="#9a9a9a" />
<rect x="752" y="881" width="2" height="2" fill="#9a9a9a" />
<rect x="769.5" y="873.5" width="462" height="14" fill="#fff" stroke="#ababab"/>
<rect x="1173" y="874" width="44" height="13" fill="#dadada" />
<rect x="769.5" y="873.5" width="13" height="14" fill="#fff" stroke="#ababab"/><path d="M778,876.5 v7 l-4,-3.5z" fill="#777"/>
<rect x="1172" y="874" width="1" height="13" fill="#ababab" />
<rect x="1217.5" y="873.5" width="14" height="14" fill="#fff" stroke="#ababab"/><path d="M1223,876.5 v7 l4,-3.5z" fill="#777"/>
<rect x="1" y="894" width="1252" height="1" fill="#d5d5d5" />
<rect x="1" y="895" width="1252" height="21" fill="#f3f3f3" />
<circle cx="13" cy="901" r="3.5" fill="#666"/><g fill="none" stroke="#666" stroke-width="1"><rect x="10.5" y="902.5" width="12" height="8"/><path d="M10.5,905.5 h12 M10.5,908 h12 M14.5,902.5 v8 M18.5,902.5 v8"/></g><rect x="17" y="899" width="6" height="3" fill="#666"/>
<rect x="945" y="895" width="40" height="21" fill="#c6c6c6" />
<g fill="none" stroke="#6a6a6a" stroke-width="1.1"><rect x="958.5" y="898.5" width="12" height="12"/><path d="M962.5,898.5 v12 M966.5,898.5 v12 M958.5,902.5 h12 M958.5,906.5 h12"/></g>
<g fill="none" stroke="#777" stroke-width="1.2"><rect x="998.5" y="898.5" width="13" height="12"/><rect x="1001.5" y="900.5" width="7" height="8"/></g><path d="M1003,902.5 h4 M1003,904.5 h4 M1003,906.5 h4" stroke="#777" stroke-width="1"/>
<g fill="none" stroke="#777" stroke-width="1.2"><rect x="1038.5" y="898.5" width="13" height="12"/><path d="M1038.5,905.5 h8 v-7 M1042.5,898.5 v7"/></g>
<rect x="1071" y="905" width="8" height="1" fill="#444" />
<rect x="1084" y="905" width="100" height="1" fill="#aaaaaa" />
<rect x="1122" y="899" width="5" height="12" fill="#666" />
<rect x="1134" y="902" width="1" height="6" fill="#999" />
<rect x="1189" y="904" width="9" height="1" fill="#444" />
<rect x="1193" y="900" width="1" height="9" fill="#444" />
<text x="1210.3" y="908" font-size="11.5" fill="#333" text-anchor="start" textLength="23.3" lengthAdjust="spacingAndGlyphs" >80 %</text>
<rect x="0" y="33" width="1" height="884" fill="#217346" />
<rect x="1253" y="33" width="1" height="884" fill="#217346" />
<rect x="0" y="916" width="1254" height="1" fill="#217346" />
</svg>
</body></html>
